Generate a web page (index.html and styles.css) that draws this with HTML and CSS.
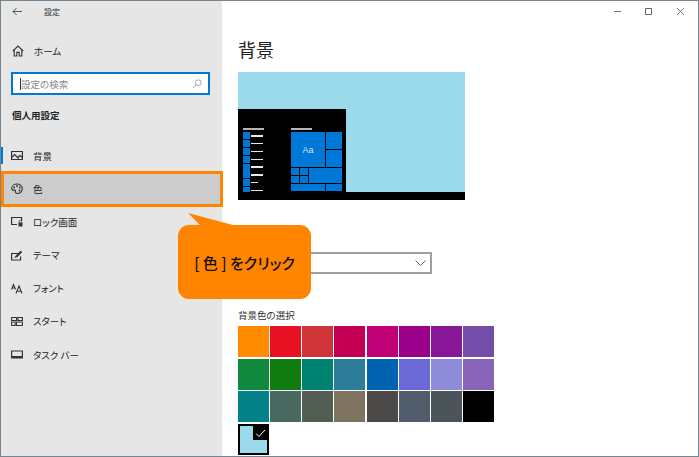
FILE: index.html
```html
<!DOCTYPE html>
<html lang="ja">
<head>
<meta charset="utf-8">
<title>設定</title>
<link rel="stylesheet" href="styles.css">
</head>
<body>
<div class="window">
  <aside class="sidebar">
    <div class="titlebar">
      <svg class="back" viewBox="0 0 12 10"><path d="M5 1 1 5l4 4M1 5h10" fill="none" stroke="#444" stroke-width="1"/></svg>
      <span class="app-title">設定</span>
    </div>
    <div class="home">
      <svg class="icon" viewBox="0 0 12 12"><path d="M.8 6 6 1l5.200 5M2.200 5v6h2.600V7.400h2.400V11h2.600V5" fill="none" stroke="#333" stroke-width="1.100"/></svg>
      <span>ホーム</span>
    </div>
    <div class="search">
      <span class="caret"></span>
      <span class="placeholder">設定の検索</span>
      <svg class="search-icon" viewBox="0 0 10 10"><circle cx="6.300" cy="3.700" r="2.900" fill="none" stroke="#999" stroke-width=".9"/><path d="M4.200 5.800.8 9.200" stroke="#999" stroke-width=".9"/></svg>
    </div>
    <h2 class="section">個人用設定</h2>
    <nav class="nav">
      <div class="nav-item current">
        <svg class="icon" viewBox="0 0 12 11"><path d="M.6 1.500h10.800v8H.6zM.6 7.500l3-3 4 4M7 7l2-1.500 2.400 2" fill="none" stroke="#333" stroke-width="1.200"/></svg>
        <span>背景</span>
      </div>
      <div class="nav-item selected">
        <svg class="icon tall" viewBox="0 0 12 12"><path d="M6 1C3 1 .7 3 .7 5.600c0 1.500 1.300 1.700 2.300 1.500 1-.2 1.700.3 1.500 1.300-.2 1.200.3 2.100 1.700 2.100 3 0 5.100-2.300 5.100-4.900C11.300 3 9 1 6 1z" fill="none" stroke="#333" stroke-width="1.100"/><circle cx="3.200" cy="4.500" r=".9" fill="#333"/><circle cx="6" cy="3" r=".9" fill="#333"/><circle cx="8.800" cy="4.500" r=".9" fill="#333"/><circle cx="8.500" cy="7.500" r=".9" fill="#333"/></svg>
        <span>色</span>
      </div>
      <div class="nav-item">
        <svg class="icon" viewBox="0 0 12 11"><path d="M6 8.500H.6v-7h10V4.500" fill="none" stroke="#333" stroke-width="1.200"/><path d="M7.500 6.500h4v4h-4z" fill="#333"/><path d="M8.300 6.500V5.300a1.200 1.200 0 0 1 2.400 0V6.500" fill="none" stroke="#333" stroke-width=".8"/></svg>
        <span>ロック画面</span>
      </div>
      <div class="nav-item">
        <svg class="icon" viewBox="0 0 12 11"><path d="M9 3.500H.6v6.500h9V6.500" fill="none" stroke="#333" stroke-width="1.200"/><path d="M3 8 5 5.500 9.500.7l1.800 1.300L6.500 7z" fill="#333"/></svg>
        <span>テーマ</span>
      </div>
      <div class="nav-item">
        <svg class="icon" viewBox="0 0 12 11"><path d="M.5 6.500 2.500 1.500 4.500 6.500M1.200 5h2.600M5 10.500 8 3l3 7.500M6 8.200h4" fill="none" stroke="#333" stroke-width="1.100"/></svg>
        <span>フォント</span>
      </div>
      <div class="nav-item">
        <svg class="icon" viewBox="0 0 12 11"><path d="M.6 1.500h5v3h-5zM7 1.500h4.400v3H7zM.6 6h3.500v3.500H.6zM5.500 6h5.900v3.500H5.500z" fill="none" stroke="#333" stroke-width="1.100"/></svg>
        <span>スタート</span>
      </div>
      <div class="nav-item">
        <svg class="icon" viewBox="0 0 12 11"><path d="M.6 2h10.800v7H.6z" fill="none" stroke="#333" stroke-width="1.200"/><path d="M.6 7h10.800v2H.6z" fill="#333"/></svg>
        <span>タスク バー</span>
      </div>
    </nav>
  </aside>

  <main class="content">
    <div class="window-controls">
      <span class="ctl"><svg viewBox="0 0 9 9"><path d="M1 4.500h7" stroke="#777" stroke-width="1"/></svg></span>
      <span class="ctl"><svg viewBox="0 0 9 9"><path d="M1.500 1.500h6v6h-6z" fill="none" stroke="#666" stroke-width="1"/></svg></span>
      <span class="ctl"><svg viewBox="0 0 9 9"><path d="m1 1 7 7M8 1 1 8" stroke="#666" stroke-width=".9"/></svg></span>
    </div>
    <h1 class="page-title">背景</h1>
    <div class="preview">
      <div class="desktop">
        <div class="start-menu">
          <div class="menu-apps">
            <div class="menu-head"></div>
            <div class="app-row"><i></i><b></b></div>
            <div class="app-row"><i></i><b></b></div>
            <div class="app-row"><i></i><b></b></div>
            <div class="app-row"><i></i><b></b></div>
            <div class="app-row"><i></i><b></b></div>
            <div class="app-row"><i></i><b></b></div>
            <div class="app-row"><i></i><b class="short"></b></div>
            <div class="app-row"><i></i><b></b></div>
          </div>
          <div class="menu-tiles">
            <div class="menu-head"></div>
            <div class="tiles">
              <div class="tile big">Aa</div>
              <div class="tile r1"></div>
              <div class="tile r2"></div>
              <div class="tile s1"></div>
              <div class="tile s2"></div>
              <div class="tile s3"></div>
              <div class="tile s4"></div>
              <div class="tile wide"></div>
              <div class="tile low1"></div>
              <div class="tile low2"></div>
            </div>
          </div>
        </div>
      </div>
      <div class="taskbar"></div>
    </div>
    <div class="dropdown">
      <svg class="chevron" viewBox="0 0 11 6"><path d="m.5.500 5 5 5-5" fill="none" stroke="#666" stroke-width="1"/></svg>
    </div>
    <div class="swatch-label">背景色の選択</div>
    <div class="swatches">
      <span class="sw c-orange"></span><span class="sw c-red"></span><span class="sw c-brick"></span><span class="sw c-rose"></span><span class="sw c-magenta"></span><span class="sw c-plum"></span><span class="sw c-violet"></span><span class="sw c-purple"></span>
      <span class="sw c-green"></span><span class="sw c-leaf"></span><span class="sw c-teal"></span><span class="sw c-steel"></span><span class="sw c-blue"></span><span class="sw c-iris"></span><span class="sw c-lav"></span><span class="sw c-amethyst"></span>
      <span class="sw c-sea"></span><span class="sw c-moss"></span><span class="sw c-sage"></span><span class="sw c-taupe"></span><span class="sw c-char"></span><span class="sw c-slate"></span><span class="sw c-storm"></span><span class="sw c-black"></span>
      <span class="sw chosen"><span class="tick"><svg viewBox="0 0 14 14"><path d="m3 7.500 3 3 6-6.500" fill="none" stroke="#fff" stroke-width="1"/></svg></span></span>
    </div>
  </main>

  <div class="highlight"></div>
  <div class="callout">
    <svg class="callout-tail" viewBox="0 0 46 13"><path d="M0 0 12 12h33z" fill="#ff8400"/></svg>
    <span>[ 色 ] をクリック</span>
  </div>
</div>
</body>
</html>
```
FILE: styles.css
```css
* { box-sizing: border-box; }
html, body { margin: 0; padding: 0; background: #fff; }
body {
  font-family: "Noto Sans CJK JP", "Noto Sans", sans-serif;
  font-feature-settings: "palt";
  color: #222;
}
.window {
  position: relative;
  display: flex;
  width: 699px;
  height: 457px;
  overflow: hidden;
  border: 1px solid #76868f;
  background: #fff;
}

/* sidebar */
.sidebar {
  width: 221px;
  flex: none;
  background: #e6e6e6;
  display: flex;
  flex-direction: column;
  font-size: 9.5px;
}
.titlebar { display: flex; align-items: center; height: 20px; padding-left: 11px; }
.back { width: 11px; height: 9px; }
.app-title { margin-left: 21px; font-size: 8px; color: #333; }
.home { display: flex; align-items: center; height: 20px; margin-top: 20px; padding-left: 11px; }
.icon { width: 12px; height: 11px; flex: none; margin-right: 10px; }
.icon.tall { height: 12px; }
.home .icon { margin-right: 10px; height: 12px; }
.search {
  display: flex;
  align-items: center;
  width: 199px;
  height: 23px;
  margin: 11px 0 0 10px;
  padding: 0 6px 0 7px;
  background: #fff;
  border: 2px solid #0078d7;
}
.caret { width: 1px; height: 12px; background: #333; flex: none; }
.placeholder { flex: 1; color: #8a8a8a; font-size: 9.5px; }
.search-icon { width: 10px; height: 10px; flex: none; }
.section {
  margin: 12px 0 0 11px;
  height: 16px;
  font-size: 9.5px;
  font-weight: 700;
  line-height: 16px;
  color: #222;
}
.nav { display: flex; flex-direction: column; margin-top: 16px; }
.nav-item {
  position: relative;
  display: flex;
  align-items: center;
  height: 33.17px;
  padding-left: 10px;
}
.nav-item.selected { background: #ccc; }
.nav-item.current::before {
  content: "";
  position: absolute;
  left: 0;
  top: 8px;
  width: 2px;
  height: 17px;
  background: #0078d7;
}

/* main */
.content { flex: 1; min-width: 0; padding-left: 16px; }
.window-controls { display: flex; justify-content: flex-end; height: 20px; padding-right: 2px; }
.ctl { display: flex; align-items: center; justify-content: center; width: 31.5px; height: 20px; }
.ctl svg { width: 9px; height: 9px; }
.page-title {
  margin: 13px 0 0;
  height: 30px;
  font-size: 18px;
  font-weight: 400;
  line-height: 30px;
  color: #222;
}
.preview { display: flex; flex-direction: column; width: 227px; height: 128px; margin-top: 8px; background: #9bdaea; }
.desktop { flex: 1; display: flex; align-items: flex-end; }
.taskbar { height: 8px; background: #000; }
.start-menu { display: flex; width: 108px; height: 83px; padding: 19px 0 0 5px; background: #000; }
.menu-apps { width: 48px; }
.menu-head { width: 21px; height: 2px; background: #b5b5b5; margin-bottom: 2px; }
.app-row { display: flex; align-items: center; height: 7.8px; }
.app-row i { width: 7px; height: 7px; background: #0078d7; }
.app-row b { width: 12px; height: 1.500px; margin-left: 1px; background: #e8e8e8; }
.app-row b.short { width: 7px; }
.tiles {
  display: grid;
  grid-template-columns: 8px 8px 16px 16px;
  grid-template-rows: 17px 17px 7px 7px 7px;
  gap: 1px;
  width: 51px;
}
.tile { background: #0078d7; }
.big {
  grid-column: 1 / 4;
  grid-row: 1 / 3;
  display: flex;
  align-items: center;
  justify-content: center;
  color: #cfe6f7;
  font: 9px "Liberation Sans", sans-serif;
}
.r1 { grid-column: 4; grid-row: 1; }
.r2 { grid-column: 4; grid-row: 2; }
.s1 { grid-column: 1; grid-row: 3; }
.s2 { grid-column: 2; grid-row: 3; }
.s3 { grid-column: 1; grid-row: 4; }
.s4 { grid-column: 2; grid-row: 4; }
.wide { grid-column: 3 / 5; grid-row: 3 / 5; }
.low1 { grid-column: 1 / 4; grid-row: 5; }
.low2 { grid-column: 4; grid-row: 5; }

.dropdown {
  display: flex;
  align-items: center;
  justify-content: flex-end;
  width: 194px;
  height: 22px;
  margin-top: 52px;
  padding-right: 4px;
  border: 2px solid #a0a0a0;
  background: #fff;
}
.chevron { width: 11px; height: 6px; }
.swatch-label { margin-top: 34px; height: 14px; font-size: 9.5px; line-height: 14px; color: #333; }
.swatches {
  display: grid;
  grid-template-columns: repeat(8, 31px);
  grid-auto-rows: 31px;
  column-gap: 1.140px;
  row-gap: 1.670px;
  margin-top: 4px;
}
.c-orange { background: #ff8c00; }
.c-red { background: #e81123; }
.c-brick { background: #d13438; }
.c-rose { background: #c30052; }
.c-magenta { background: #bf0077; }
.c-plum { background: #9a0089; }
.c-violet { background: #881798; }
.c-purple { background: #744da9; }
.c-green { background: #10893e; }
.c-leaf { background: #107c10; }
.c-teal { background: #008272; }
.c-steel { background: #2d7d9a; }
.c-blue { background: #0063b1; }
.c-iris { background: #6b69d6; }
.c-lav { background: #8e8cd8; }
.c-amethyst { background: #8764b8; }
.c-sea { background: #038387; }
.c-moss { background: #486860; }
.c-sage { background: #525e54; }
.c-taupe { background: #7e735f; }
.c-char { background: #4c4a48; }
.c-slate { background: #515c6b; }
.c-storm { background: #4a5459; }
.c-black { background: #000; }
.chosen {
  display: flex;
  justify-content: flex-end;
  align-items: flex-start;
  background: #9bdaea;
  border: 2px solid #000;
}
.tick { width: 14px; height: 14px; background: #000; }
.tick svg { display: block; width: 14px; height: 14px; }

/* annotation overlay */
.highlight {
  position: absolute;
  left: 0;
  top: 170px;
  width: 222px;
  height: 36px;
  border: 3px solid #ff8400;
}
.callout {
  position: absolute;
  left: 177px;
  top: 224px;
  display: flex;
  align-items: center;
  justify-content: center;
  width: 133px;
  height: 74px;
  border-radius: 11px;
  background: #ff8400;
  color: #111;
  font-size: 15px;
  font-weight: 500;
}
.callout-tail { position: absolute; left: 10px; top: -12px; width: 46px; height: 13px; }
```
